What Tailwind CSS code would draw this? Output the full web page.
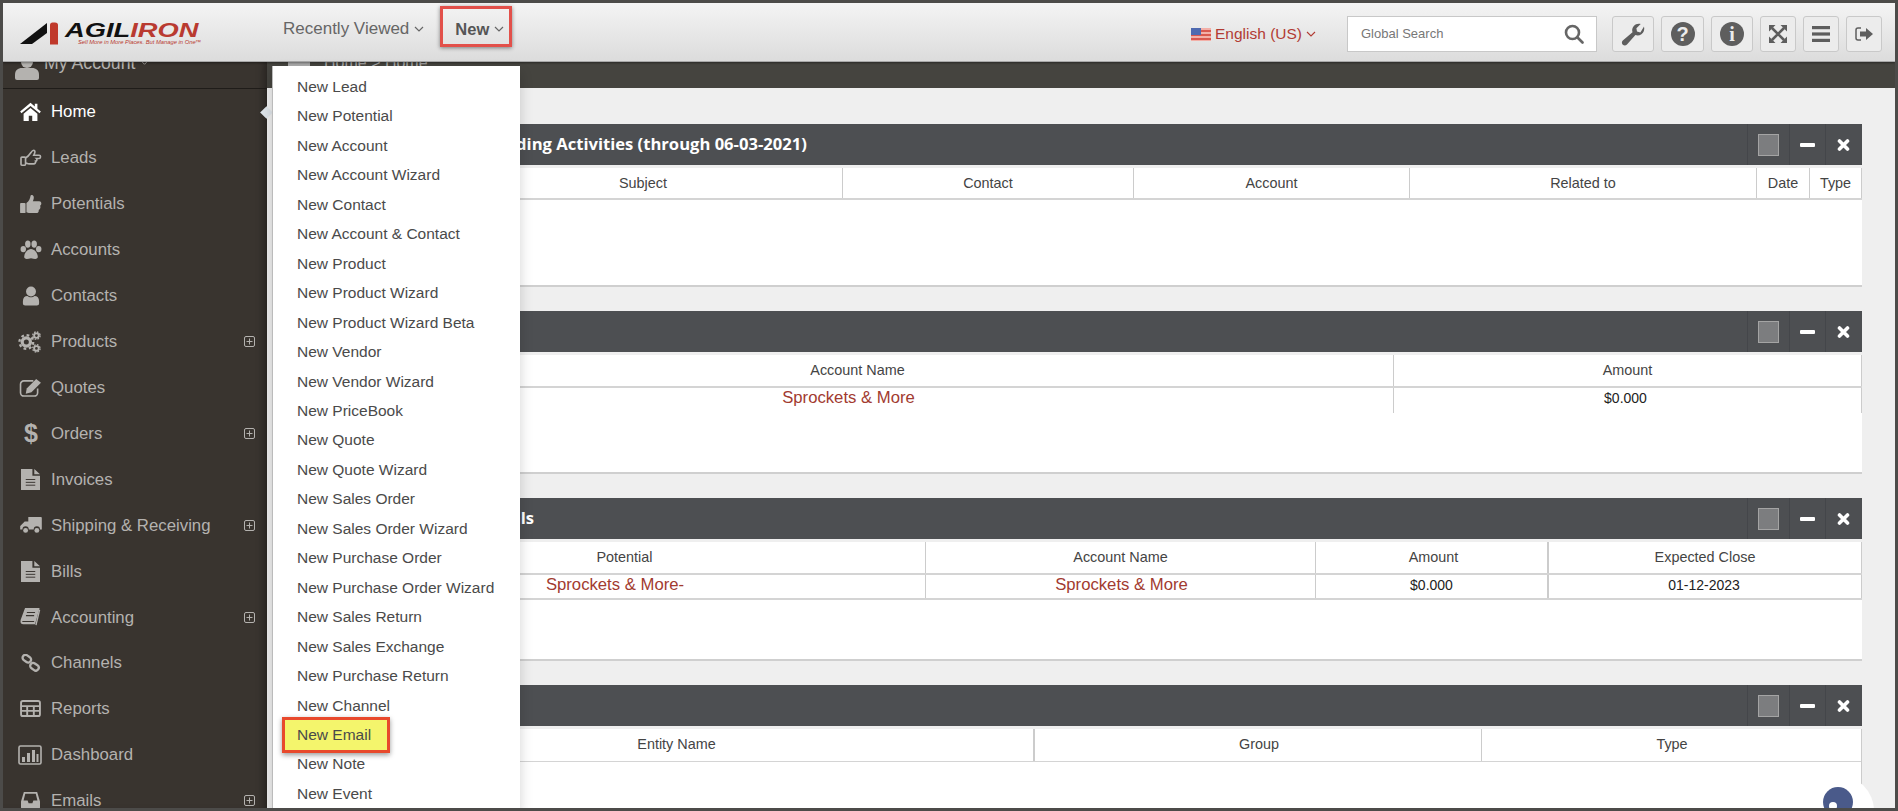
<!DOCTYPE html>
<html lang="en">
<head>
    <meta charset="UTF-8">
    <title>AgilIron</title>
    <script src="https://cdn.jsdelivr.net/npm/@tailwindcss/browser@4"></script>
</head>
<body class="font-['Liberation_Sans',Arial,sans-serif] overflow-hidden">
<div class="relative h-[811px] w-[1898px] border-[3px] border-[#4c4b49] overflow-hidden bg-[#efefef] flex flex-col">

    <!-- Top bar -->
    <header class="relative z-20 h-[59px] shrink-0 flex items-center bg-gradient-to-b from-[#f4f4f4] to-[#dcdcdc] border-b border-[#a9a9a9] shadow-[0_1px_2px_rgba(0,0,0,.4)]">
        <div class="relative w-[280px] h-full shrink-0">
            <svg class="absolute left-[17px] top-[19px]" width="40" height="23" viewBox="0 0 40 23">
                <polygon points="0,22 27,1 27,11 12,22" fill="#111"/>
                <path d="M30 3c0-1.500 1-2.500 2.500-2.500H35c2 0 3 1 3 2.500v19.500h-8z" fill="#c0392b"/>
            </svg>
            <div class="absolute left-[62px] top-[15px] leading-[24px] text-[21px] font-bold italic whitespace-nowrap origin-left scale-x-[1.3] text-[#111]">AGIL<span class="text-[#b93a30]">IRON</span></div>
            <div class="absolute left-[75px] top-[35px] leading-[8px] text-[5.800px] italic whitespace-nowrap text-[#b93a30]">Sell More in More Places. But Manage in One™</div>
        </div>
        <div class="-mt-[6px] flex items-center gap-[5px] text-[17px] text-[#666]">Recently Viewed
            <svg width="10" height="7" viewBox="0 0 10 7" fill="none" stroke="#666" stroke-width="1.200"><path d="M1 1l4 4 4-4"/></svg>
        </div>
        <div class="relative -mt-[6px] ml-[31px] flex items-center gap-[5px] text-[16.500px] font-bold text-[#555]">New
            <svg width="10" height="7" viewBox="0 0 10 7" fill="none" stroke="#666" stroke-width="1.200"><path d="M1 1l4 4 4-4"/></svg>
            <span class="absolute left-[-15px] top-[-11px] w-[72px] h-[41px] border-[3px] border-[#e2504a] shadow-[0_1px_4px_rgba(0,0,0,.45)]"></span>
        </div>

        <div class="ml-auto mt-[4px] flex items-center">
            <svg width="20" height="13" viewBox="0 0 20 13" class="mr-[4px]">
                <rect width="20" height="13" fill="#f3b0a8"/>
                <rect y="2" width="20" height="2" fill="#d9584f"/><rect y="6" width="20" height="2" fill="#d9584f"/><rect y="10" width="20" height="2" fill="#d9584f"/>
                <rect width="10" height="7" fill="#4f6ab0"/>
            </svg>
            <span class="text-[15.500px] text-[#b23b33]">English (US)</span>
            <svg width="10" height="7" viewBox="0 0 10 7" fill="none" stroke="#b23b33" stroke-width="1.100" class="ml-[4px]"><path d="M1 1l4 4 4-4"/></svg>
            <div class="ml-[31px] w-[250px] h-[36px] bg-white border border-[#c8c8c8] flex items-center justify-between pl-[13px] pr-[12px]">
                <span class="text-[13px] text-[#777]">Global Search</span>
                <svg width="20" height="20" viewBox="0 0 20 20" fill="none" stroke="#666" stroke-width="2.600"><circle cx="8.500" cy="8.500" r="6.500"/><path d="M13.500 13.500l5 5" stroke-linecap="round"/></svg>
            </div>
            <div class="ml-[15px] mr-[13px] flex gap-[7px] text-[#5e5e5e]">
                <button class="w-[42px] h-[36px] flex items-center justify-center bg-[#ececec] border border-[#c9c9c9] rounded-[3px]">
                    <svg width="26" height="26" viewBox="0 0 26 26"><path d="M24 5.500c.8 3.200-.2 6-2.600 7.700-1.900 1.300-4 1.500-6 .8L7 23.500c-1.200 1.300-3 1.300-4.200.2-1.200-1.200-1.200-3 0-4.200l9.700-8.300c-.7-2.300-.3-4.600 1.300-6.300 1.800-1.900 4.300-2.600 6.900-1.900l-4.300 4.200.6 3.400 3.400.8z" fill="currentColor"/></svg>
                </button>
                <button class="w-[43px] h-[36px] flex items-center justify-center bg-[#ececec] border border-[#c9c9c9] rounded-[3px]">
                    <span class="w-[24px] h-[24px] rounded-full bg-[#5e5e5e] text-[#ececec] text-[20px] leading-[24px] font-bold text-center">?</span>
                </button>
                <button class="w-[42px] h-[36px] flex items-center justify-center bg-[#ececec] border border-[#c9c9c9] rounded-[3px]">
                    <span class="w-[24px] h-[24px] rounded-full bg-[#5e5e5e] text-[#ececec] text-[20px] leading-[24px] font-bold text-center font-['Liberation_Serif',serif]">i</span>
                </button>
                <button class="w-[36px] h-[36px] flex items-center justify-center bg-[#ececec] border border-[#c9c9c9] rounded-[3px]">
                    <svg width="18" height="18" viewBox="0 0 18 18"><path d="M0 0h6.500L0 6.500zM18 0v6.500L11.500 0zM0 18v-6.500L6.500 18zM18 18h-6.500l6.500-6.500z" fill="currentColor"/><path d="M3 3l12 12M15 3 3 15" stroke="currentColor" stroke-width="2.600"/></svg>
                </button>
                <button class="w-[36px] h-[36px] flex items-center justify-center bg-[#ececec] border border-[#c9c9c9] rounded-[3px]">
                    <svg width="18" height="16" viewBox="0 0 18 16" fill="currentColor"><rect width="18" height="3.200"/><rect y="6.400" width="18" height="3.200"/><rect y="12.800" width="18" height="3.200"/></svg>
                </button>
                <button class="w-[36px] h-[36px] flex items-center justify-center bg-[#ececec] border border-[#c9c9c9] rounded-[3px]">
                    <svg width="18" height="14" viewBox="0 0 18 14"><path d="M6 1H3a2 2 0 0 0-2 2v8a2 2 0 0 0 2 2h3" fill="none" stroke="currentColor" stroke-width="1.500"/><path d="M5 4.500h6V1l7 6-7 6V9.500H5z" fill="currentColor"/></svg>
                </button>
            </div>
        </div>
    </header>

    <div class="flex flex-1 min-h-0">
        <!-- Sidebar -->
        <aside class="w-[264px] shrink-0 bg-[#39342f] text-[#b4b2af] text-[16.800px] shadow-[inset_-8px_0_8px_-6px_rgba(0,0,0,.35)]">
            <div class="h-[27px] border-b border-[#1f1c19] flex items-start pl-[12px] gap-[5px]">
                <svg class="-mt-[6px] text-[#b4b2af]" width="24" height="24" viewBox="0 0 24 24" fill="currentColor"><circle cx="12" cy="6" r="6"/><path d="M0 19c0-5 3-7 7-7h10c4 0 7 2 7 7v3a2 2 0 0 1-2 2H2a2 2 0 0 1-2-2z"/></svg>
                <span class="-mt-[9px] leading-5 whitespace-nowrap text-[17.700px]">My Account</span>
                <svg class="-mt-[2px]" width="9" height="6" viewBox="0 0 10 7" fill="none" stroke="#b4b2af" stroke-width="1"><path d="M1 1l4 4 4-4"/></svg>
            </div>

            <a class="relative flex items-center h-[45.930px] pl-[12px] text-white">
                <span class="w-[36px]"><svg class="ml-[5px]" width="21" height="19" viewBox="0 0 24 22" fill="currentColor"><path d="M12 1 0 11l1.500 2L12 4.500 22.500 13 24 11l-4-3.300V2h-3v3.200z"/><path d="M4 13.500V22h6v-6h4v6h6v-8.500L12 7z"/></svg></span>
                Home
                <span class="absolute right-[-4px] top-[19px] w-[9px] h-[9px] rotate-45 bg-[#dfe5ea]"></span>
            </a>
            <a class="flex items-center h-[45.930px] pl-[12px]">
                <span class="w-[36px]"><svg class="ml-[5px]" width="22" height="20" viewBox="0 0 24 22" fill="none" stroke="currentColor" stroke-width="1.800"><rect x="1" y="10" width="5" height="9" rx="1"/><path d="M6 11c2-1 4-3 6-6 1-2 3-3 4-2 1 1 0 3-1 5h6c2 0 2 3 0 3.500h-3c1 1 .5 3-1 3 .5 1.500-.5 3-2 3H10c-2 0-3-1-4-1"/></svg></span>
                Leads
            </a>
            <a class="flex items-center h-[45.930px] pl-[12px]">
                <span class="w-[36px]"><svg class="ml-[5px]" width="22" height="20" viewBox="0 0 24 22" fill="currentColor"><rect x="0" y="10" width="6" height="11" rx="1"/><path d="M7 10c3-2 4-5 4.500-8 .2-1.500 3-1.500 3.500 1 .4 2-.5 4-1 5h7c3 0 3 4 1 5 1 2 0 4-1.500 4.500.5 2-1 3.500-2.500 3.500H11c-2 0-3-1-4-1z"/></svg></span>
                Potentials
            </a>
            <a class="flex items-center h-[45.930px] pl-[12px]">
                <span class="w-[36px]"><svg class="ml-[5px]" width="22" height="20" viewBox="0 0 24 22" fill="currentColor"><ellipse cx="3.500" cy="10" rx="3" ry="3.500"/><ellipse cx="20.500" cy="10" rx="3" ry="3.500"/><ellipse cx="8.500" cy="4.500" rx="3" ry="4"/><ellipse cx="15.500" cy="4.500" rx="3" ry="4"/><path d="M12 10c-4 0-7.500 5-7.500 8.500C4.500 21.500 8 21 12 20c4 1 7.500 1.500 7.500-1.500C19.500 15 16 10 12 10z"/></svg></span>
                Accounts
            </a>
            <a class="flex items-center h-[45.930px] pl-[12px]">
                <span class="w-[36px]"><svg class="ml-[7px]" width="18" height="20" viewBox="0 0 20 22" fill="currentColor"><circle cx="10" cy="6" r="5.500"/><path d="M1 17c0-4 2-6 5-6 1 1 2.500 1.500 4 1.500S13 12 14 11c3 0 5 2 5 6v2c0 1.500-1 2.500-2.500 2.500h-13C2 21.500 1 20.500 1 19z"/></svg></span>
                Contacts
            </a>
            <a class="flex items-center h-[45.930px] pl-[12px]">
                <span class="w-[36px]"><svg class="ml-[3px]" width="24" height="22" viewBox="0 0 26 24" fill="none" stroke="currentColor"><circle cx="9" cy="12" r="4.500" stroke-width="3.500"/><circle cx="9" cy="12" r="7.500" stroke-width="2.500" stroke-dasharray="3 2.900"/><circle cx="20" cy="5" r="2.500" stroke-width="2"/><circle cx="20" cy="5" r="4" stroke-width="1.500" stroke-dasharray="1.800 1.350"/><circle cx="20" cy="19" r="2.500" stroke-width="2"/><circle cx="20" cy="19" r="4" stroke-width="1.500" stroke-dasharray="1.800 1.350"/></svg></span>
                Products
                <svg class="ml-auto mr-[12px]" width="11" height="11" viewBox="0 0 11 11" fill="none" stroke="currentColor"><rect x=".5" y=".5" width="10" height="10" rx="1.500"/><path d="M5.500 2.500v6M2.500 5.500h6"/></svg>
            </a>
            <a class="flex items-center h-[45.930px] pl-[12px]">
                <span class="w-[36px]"><svg class="ml-[4px]" width="23" height="19" viewBox="0 0 24 20"><path d="M15 3H5a3.500 3.500 0 0 0-3.500 3.500v9A3.500 3.500 0 0 0 5 19h11a3.500 3.500 0 0 0 3.500-3.500V11" fill="none" stroke="currentColor" stroke-width="1.700"/><path d="M8 11 18 1l5 4-10 10-6 1.500z" fill="currentColor"/></svg></span>
                Quotes
            </a>
            <a class="flex items-center h-[45.930px] pl-[12px]">
                <span class="w-[36px] pl-[9px] text-[25px] leading-[22px] font-bold">$</span>
                Orders
                <svg class="ml-auto mr-[12px]" width="11" height="11" viewBox="0 0 11 11" fill="none" stroke="currentColor"><rect x=".5" y=".5" width="10" height="10" rx="1.500"/><path d="M5.500 2.500v6M2.500 5.500h6"/></svg>
            </a>
            <a class="flex items-center h-[45.930px] pl-[12px]">
                <span class="w-[36px]"><svg class="ml-[6px]" width="19" height="21" viewBox="0 0 20 22"><path d="M0 0h12v7h8v15H0zM14 0l6 5.500h-6z" fill="currentColor"/><path d="M5 11h10M5 14h10M5 17h10" stroke="#39342f" stroke-width="1"/></svg></span>
                Invoices
            </a>
            <a class="flex items-center h-[45.930px] pl-[12px]">
                <span class="w-[36px]"><svg class="ml-[5px]" width="22" height="18" viewBox="0 0 24 20" fill="currentColor"><path d="M9 1h14a1 1 0 0 1 1 1v13h-2a3.500 3.500 0 0 0-7 0H9.500a3.500 3.500 0 0 0-7 0H0v-4l5-5h4z"/><circle cx="6" cy="16" r="2.700"/><circle cx="18.500" cy="16" r="2.700"/></svg></span>
                Shipping &amp; Receiving
                <svg class="ml-auto mr-[12px]" width="11" height="11" viewBox="0 0 11 11" fill="none" stroke="currentColor"><rect x=".5" y=".5" width="10" height="10" rx="1.500"/><path d="M5.500 2.500v6M2.500 5.500h6"/></svg>
            </a>
            <a class="flex items-center h-[45.930px] pl-[12px]">
                <span class="w-[36px]"><svg class="ml-[6px]" width="19" height="21" viewBox="0 0 20 22"><path d="M0 0h12v7h8v15H0zM14 0l6 5.500h-6z" fill="currentColor"/><path d="M5 11h10M5 14h10M5 17h10" stroke="#39342f" stroke-width="1"/></svg></span>
                Bills
            </a>
            <a class="flex items-center h-[45.930px] pl-[12px]">
                <span class="w-[36px]"><svg class="ml-[5px]" width="21" height="20" viewBox="0 0 22 22"><path d="M5 1h16L16 19H3c-2 0-3-1-3-3 0-1 .2-2 .6-3z" fill="currentColor"/><path d="M7 6h9M6 9.500h9M2 16h13" stroke="#39342f" stroke-width="1.200"/><path d="M21 3l-4 17" stroke="currentColor" stroke-width="1.500"/></svg></span>
                Accounting
                <svg class="ml-auto mr-[12px]" width="11" height="11" viewBox="0 0 11 11" fill="none" stroke="currentColor"><rect x=".5" y=".5" width="10" height="10" rx="1.500"/><path d="M5.500 2.500v6M2.500 5.500h6"/></svg>
            </a>
            <a class="flex items-center h-[45.930px] pl-[12px]">
                <span class="w-[36px]"><svg class="ml-[6px]" width="20" height="18" viewBox="0 0 22 20" fill="none" stroke="currentColor" stroke-width="2.600"><rect x="1.500" y="2" width="10" height="6.500" rx="3.200" transform="rotate(35 6.500 5)"/><rect x="10" y="11" width="10" height="6.500" rx="3.200" transform="rotate(35 15 14)"/></svg></span>
                Channels
            </a>
            <a class="flex items-center h-[45.930px] pl-[12px]">
                <span class="w-[36px]"><svg class="ml-[5px]" width="21" height="17" viewBox="0 0 22 18" fill="none" stroke="currentColor" stroke-width="2"><rect x="1" y="1" width="20" height="16" rx="2"/><path d="M1 6.500h20M1 11.500h20M7.500 6v11M14.500 6v11"/></svg></span>
                Reports
            </a>
            <a class="flex items-center h-[45.930px] pl-[12px]">
                <span class="w-[36px]"><svg class="ml-[3px]" width="24" height="20" viewBox="0 0 24 20"><rect x="1" y="1" width="22" height="18" rx="1.500" fill="none" stroke="currentColor" stroke-width="1.600"/><path d="M4 12h3v5H4zM9 8h3v9H9zM14 5h3v12h-3zM18.500 9h2v8h-2z" fill="currentColor"/></svg></span>
                Dashboard
            </a>
            <a class="flex items-center h-[45.930px] pl-[12px]">
                <span class="w-[36px]"><svg class="ml-[6px]" width="19" height="19" viewBox="0 0 20 20" fill="currentColor"><path d="M3 1h14l3 10v6a2 2 0 0 1-2 2H2a2 2 0 0 1-2-2v-6zM4.500 3 2.700 10H7l1 3h4l1-3h4.300L15.500 3z" fill-rule="evenodd"/></svg></span>
                Emails
                <svg class="ml-auto mr-[12px]" width="11" height="11" viewBox="0 0 11 11" fill="none" stroke="currentColor"><rect x=".5" y=".5" width="10" height="10" rx="1.500"/><path d="M5.500 2.500v6M2.500 5.500h6"/></svg>
            </a>
        </aside>

        <!-- Main column -->
        <main class="flex-1 min-w-0">
            <div class="h-[26px] bg-[#45443f] flex items-start pl-[21px] gap-[14px] text-[#aaa] text-[16px]">
                <span class="-mt-[5px] w-[22px] h-[10px] bg-[#aaa]"></span>
                <span class="-mt-[9px] leading-5">Home &gt; Home</span>
            </div>

            <div class="pl-[25px] pr-[33px] pt-[36px] flex flex-col gap-[24px]">
                <!-- Panel 1 -->
                <section class="h-[163px] flex flex-col">
                    <div class="h-[41px] shrink-0 bg-[#4d4f52] flex items-center justify-between">
                        <h2 class="pl-[40px] text-[16.600px] font-bold text-white font-['Open_Sans',sans-serif]">My Upcoming and Pending Activities (through 06-03-2021)</h2>
                        <div class="flex h-full pr-[1px]">
                            <span class="w-[42px] flex items-center justify-center border-l border-[#44464a]"><span class="w-[21px] h-[22px] bg-[#7c7d7f] border border-[#a4a4a4]"></span></span>
                            <span class="w-[36px] flex items-center justify-center border-l border-[#44464a]"><span class="w-[15px] h-[4px] bg-white rounded-[1px]"></span></span>
                            <span class="w-[36px] flex items-center justify-center border-l border-[#44464a] text-white"><svg width="13" height="12" viewBox="0 0 13 12" fill="none" stroke="currentColor" stroke-width="3.600" stroke-linecap="round"><path d="M2.500 2l8 8M10.500 2l-8 8"/></svg></span>
                        </div>
                    </div>
                    <div class="mt-[3px] flex-1 bg-white border-b-2 border-[#cfcfcf] text-[14.400px] text-[#444]">
                        <div class="grid grid-cols-[551px_291px_276px_347px_53px_52px] h-[32px] border-b-2 border-[#d4d4d4] text-center leading-[30px]">
                            <div class="border-r border-[#ccc] pl-[152px]">Subject</div>
                            <div class="border-r border-[#ccc]">Contact</div>
                            <div class="border-r border-[#ccc]">Account</div>
                            <div class="border-r border-[#ccc]">Related to</div>
                            <div class="border-r border-[#ccc]">Date</div>
                            <div class="border-r border-[#ccc]">Type</div>
                        </div>
                    </div>
                </section>

                <!-- Panel 2 -->
                <section class="h-[163px] flex flex-col">
                    <div class="h-[41px] shrink-0 bg-[#4d4f52] flex items-center justify-between">
                        <h2 class="pl-[40px] text-[16.600px] font-bold text-white font-['Open_Sans',sans-serif]">Top Accounts</h2>
                        <div class="flex h-full pr-[1px]">
                            <span class="w-[42px] flex items-center justify-center border-l border-[#44464a]"><span class="w-[21px] h-[22px] bg-[#7c7d7f] border border-[#a4a4a4]"></span></span>
                            <span class="w-[36px] flex items-center justify-center border-l border-[#44464a]"><span class="w-[15px] h-[4px] bg-white rounded-[1px]"></span></span>
                            <span class="w-[36px] flex items-center justify-center border-l border-[#44464a] text-white"><svg width="13" height="12" viewBox="0 0 13 12" fill="none" stroke="currentColor" stroke-width="3.600" stroke-linecap="round"><path d="M2.500 2l8 8M10.500 2l-8 8"/></svg></span>
                        </div>
                    </div>
                    <div class="mt-[3px] flex-1 bg-white border-b-2 border-[#cfcfcf] text-[14px] text-[#444]">
                        <div class="grid grid-cols-[1102px_468px] h-[33px] border-b-2 border-[#d4d4d4] text-center leading-[30px] text-[14.400px]">
                            <div class="border-r border-[#ccc] pl-[30px]">Account Name</div>
                            <div class="border-r border-[#ccc]">Amount</div>
                        </div>
                        <div class="grid grid-cols-[1102px_468px] h-[25px] text-center">
                            <div class="border-r border-[#ccc] pl-[12px] text-[16.700px] leading-[20px] text-[#a23b30]">Sprockets &amp; More</div>
                            <div class="border-r border-[#ccc] pr-[4px] leading-[20px] text-[#222]">$0.000</div>
                        </div>
                    </div>
                </section>

                <!-- Panel 3 -->
                <section class="h-[163px] flex flex-col">
                    <div class="h-[41px] shrink-0 bg-[#4d4f52] flex items-center justify-between">
                        <h2 class="pl-[45px] text-[16.600px] font-bold text-white font-['Open_Sans',sans-serif]">My Top Open Potentials</h2>
                        <div class="flex h-full pr-[1px]">
                            <span class="w-[42px] flex items-center justify-center border-l border-[#44464a]"><span class="w-[21px] h-[22px] bg-[#7c7d7f] border border-[#a4a4a4]"></span></span>
                            <span class="w-[36px] flex items-center justify-center border-l border-[#44464a]"><span class="w-[15px] h-[4px] bg-white rounded-[1px]"></span></span>
                            <span class="w-[36px] flex items-center justify-center border-l border-[#44464a] text-white"><svg width="13" height="12" viewBox="0 0 13 12" fill="none" stroke="currentColor" stroke-width="3.600" stroke-linecap="round"><path d="M2.500 2l8 8M10.500 2l-8 8"/></svg></span>
                        </div>
                    </div>
                    <div class="mt-[3px] flex-1 bg-white border-b-2 border-[#cfcfcf] text-[14px] text-[#444]">
                        <div class="grid grid-cols-[634px_390px_233px_313px] h-[33px] border-b-2 border-[#d4d4d4] text-center leading-[30px] text-[14.400px]">
                            <div class="border-r border-[#ccc] pl-[32px]">Potential</div>
                            <div class="border-r border-[#ccc]">Account Name</div>
                            <div class="border-r-2 border-[#ccc] pl-[4px]">Amount</div>
                            <div class="border-r border-[#ccc]">Expected Close</div>
                        </div>
                        <div class="grid grid-cols-[634px_390px_233px_313px] h-[25px] text-center border-b-2 border-[#d4d4d4]">
                            <div class="border-r border-[#ccc] pl-[13px] text-[16.700px] leading-[20px] text-[#a23b30]">Sprockets &amp; More-</div>
                            <div class="border-r border-[#ccc] pl-[2px] text-[16.700px] leading-[20px] text-[#a23b30]">Sprockets &amp; More</div>
                            <div class="border-r-2 border-[#ccc] leading-[20px] text-[#222]">$0.000</div>
                            <div class="border-r border-[#ccc] pr-[2px] leading-[20px] text-[#222]">01-12-2023</div>
                        </div>
                    </div>
                </section>

                <!-- Panel 4 -->
                <section class="h-[163px] flex flex-col">
                    <div class="h-[41px] shrink-0 bg-[#4d4f52] flex items-center justify-between">
                        <h2 class="pl-[40px] text-[16.600px] font-bold text-white font-['Open_Sans',sans-serif]">Recent Items</h2>
                        <div class="flex h-full pr-[1px]">
                            <span class="w-[42px] flex items-center justify-center border-l border-[#44464a]"><span class="w-[21px] h-[22px] bg-[#7c7d7f] border border-[#a4a4a4]"></span></span>
                            <span class="w-[36px] flex items-center justify-center border-l border-[#44464a]"><span class="w-[15px] h-[4px] bg-white rounded-[1px]"></span></span>
                            <span class="w-[36px] flex items-center justify-center border-l border-[#44464a] text-white"><svg width="13" height="12" viewBox="0 0 13 12" fill="none" stroke="currentColor" stroke-width="3.600" stroke-linecap="round"><path d="M2.500 2l8 8M10.500 2l-8 8"/></svg></span>
                        </div>
                    </div>
                    <div class="mt-[3px] flex-1 bg-white border-r border-[#ccc] text-[14.400px] text-[#444]">
                        <div class="grid grid-cols-[743px_447px_380px] h-[33px] border-b border-[#d4d4d4] text-center leading-[30px]">
                            <div class="border-r-2 border-[#ccc] pl-[28px]">Entity Name</div>
                            <div class="border-r border-[#ccc] pl-[2px]">Group</div>
                            <div>Type</div>
                        </div>
                    </div>
                </section>
            </div>
        </main>
    </div>

    <!-- New dropdown menu -->
    <ul class="absolute z-30 left-[269px] top-[63px] w-[248px] h-[745px] pt-[6px] pl-[24px] bg-white border-l border-[#bbb] shadow-[0_6px_12px_rgba(0,0,0,.18)] text-[15.500px] leading-[29.460px] text-[#4a4a4a]">
        <li>New Lead</li>
        <li>New Potential</li>
        <li>New Account</li>
        <li>New Account Wizard</li>
        <li>New Contact</li>
        <li>New Account &amp; Contact</li>
        <li>New Product</li>
        <li>New Product Wizard</li>
        <li>New Product Wizard Beta</li>
        <li>New Vendor</li>
        <li>New Vendor Wizard</li>
        <li>New PriceBook</li>
        <li>New Quote</li>
        <li>New Quote Wizard</li>
        <li>New Sales Order</li>
        <li>New Sales Order Wizard</li>
        <li>New Purchase Order</li>
        <li>New Purchase Order Wizard</li>
        <li>New Sales Return</li>
        <li>New Sales Exchange</li>
        <li>New Purchase Return</li>
        <li>New Channel</li>
        <li class="relative">
            <span class="absolute left-[-15px] top-[-3px] w-[108px] h-[36px] bg-[#f4f56c] border-[3px] border-[#e8492c] shadow-[0_2px_5px_rgba(0,0,0,.4)]"></span>
            <span class="relative">New Email</span>
        </li>
        <li>New Note</li>
        <li>New Event</li>
    </ul>

    <!-- Chat bubble -->
    <div class="absolute z-10 left-[1799px] top-[772px] w-[72px] h-[72px] rounded-full bg-white">
        <span class="absolute left-[21px] top-[12px] w-[30px] h-[30px] rounded-full bg-[#4a5a8a]"></span>
        <span class="absolute left-[27px] top-[27px] w-[8px] h-[8px] rounded-full bg-white"></span>
    </div>
</div>
</body>
</html>
